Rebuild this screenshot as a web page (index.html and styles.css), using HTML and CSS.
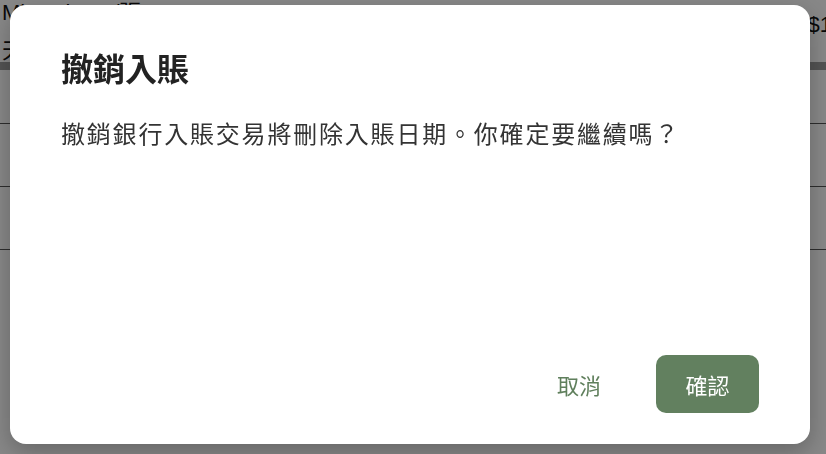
FILE: index.html
```html
<!DOCTYPE html>
<html lang="zh-Hant">
<head>
    <meta charset="UTF-8">
    <meta name="viewport" content="width=device-width, initial-scale=1.0">
    <title>撤銷入賬</title>
    <link rel="stylesheet" href="styles.css">
</head>
<body>
    <div class="page">
        <div class="page-head">
            <div class="head-row">
                <span class="who">Mi&nbsp;&nbsp;&nbsp;&nbsp;Cl&nbsp;&nbsp;&nbsp;&nbsp;&nbsp;&nbsp;&nbsp;/張</span>
                <span class="amount">$1</span>
            </div>
            <div class="head-row">
                <span>天</span>
            </div>
        </div>
        <div class="page-bar"></div>
        <div class="page-row first"></div>
        <div class="page-row"></div>
        <div class="page-row"></div>
    </div>

    <div class="overlay">
        <div class="dialog">
            <h2 class="dialog-title">撤銷入賬</h2>
            <p class="dialog-text">撤銷銀行入賬交易將刪除入賬日期。你確定要繼續嗎？</p>
            <div class="dialog-actions">
                <button class="btn btn-text">取消</button>
                <button class="btn btn-primary">確認</button>
            </div>
        </div>
    </div>
</body>
</html>
```

FILE: styles.css
```css
body {
    font-family: "Noto Sans CJK TC", "Noto Sans", sans-serif;
    margin: 0;
    padding: 0;
    width: 826px;
    height: 454px;
    overflow: hidden;
    background-color: #ffffff;
}

.page {
    height: 100%;
    color: #111;
}

.page-head {
    padding: 0 0 0 2px;
    height: 62px;
}

.head-row {
    display: flex;
    justify-content: space-between;
    font-family: "Liberation Sans", "Noto Sans CJK TC", sans-serif;
    font-size: 22px;
    line-height: 26px;
}

.amount {
    margin-top: 12px;
    margin-right: -6px;
}

.page-bar {
    height: 8px;
    background-color: #9c9c9c;
}

.page-row {
    height: 62px;
    border-bottom: 1px solid #555;
}

.page-row.first {
    height: 53px;
}

.overlay {
    position: fixed;
    inset: 0;
    background-color: rgba(0, 0, 0, 0.47);
}

.dialog {
    position: absolute;
    left: 10px;
    top: 5px;
    width: 800px;
    height: 439px;
    box-sizing: border-box;
    padding: 40px 51px 31px 51px;
    background-color: #ffffff;
    border-radius: 16px;
    box-shadow: 0 8px 24px rgba(0, 0, 0, 0.25);
    display: flex;
    flex-direction: column;
}

.dialog-title {
    margin: 0;
    font-size: 32px;
    line-height: 44px;
    font-weight: 700;
    color: #222;
}

.dialog-text {
    margin: 27px 0 0 0;
    font-size: 24px;
    line-height: 34px;
    letter-spacing: 1.8px;
    color: #333;
}

.dialog-actions {
    margin-top: auto;
    display: flex;
    justify-content: flex-end;
    align-items: center;
    gap: 31px;
}

.btn {
    font-family: inherit;
    font-size: 22px;
    border: none;
    cursor: pointer;
    border-radius: 10px;
    height: 58px;
    padding: 0 24px;
}

.btn-text {
    background: none;
    color: #5f7f5c;
}

.btn-primary {
    background-color: #62805f;
    color: #ffffff;
    width: 103px;
}
```
